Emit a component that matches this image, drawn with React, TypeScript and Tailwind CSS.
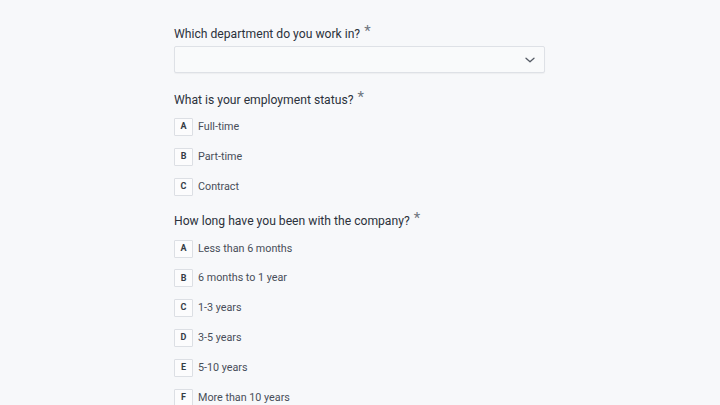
import React from "react";

const groups = [
  {
    q: "What is your employment status?",
    opts: ["Full-time", "Part-time", "Contract"],
    mt: "mt-[19px]",
    gap: "mt-[10px]",
  },
  {
    q: "How long have you been with the company?",
    opts: [
      "Less than 6 months",
      "6 months to 1 year",
      "1-3 years",
      "3-5 years",
      "5-10 years",
      "More than 10 years",
    ],
    mt: "mt-[17px]",
    gap: "mt-[11px]",
  },
];

const letters = ["A", "B", "C", "D", "E", "F"];

function Label({ text }: { text: string }) {
  return (
    <div className="flex items-start h-[16px] text-[12.15px] leading-[16px] text-[#2c323c]">
      <span>{text}</span>
      <span className="ml-[4px] -mt-[3px] text-[15px] leading-[16px] text-[#707680]">*</span>
    </div>
  );
}

export default function App() {
  return (
    <div
      className="min-h-[405px] w-[720px] bg-[#f7f8fa] overflow-hidden"
      style={{ fontFamily: "Roboto, Inter, sans-serif" }}
    >
      <div className="ml-[174px] w-[371px] pt-[26px] flex flex-col">
        <Label text="Which department do you work in?" />
        <div className="mt-[4px] h-[27px] rounded-[2px] border border-[#dee1e6] bg-[#f9fafb] shadow-[0_1px_1px_rgba(0,0,0,0.04)] flex items-center justify-end pr-[8px]">
          <svg width="12" height="12" viewBox="0 0 24 24" fill="none" stroke="#555b65" strokeWidth="2.6" strokeLinecap="round" strokeLinejoin="round">
            <path d="M4 8.5l8 7 8-7" />
          </svg>
        </div>
        {groups.map((g, gi) => (
          <div key={gi} className={`${g.mt} flex flex-col`}>
            <Label text={g.q} />
            <div className={`${g.gap} flex flex-col gap-[11.8px]`}>
              {g.opts.map((o, i) => (
                <div key={i} className="flex items-center h-[18px]">
                  <div className="w-[19px] h-[18px] border border-[#dcdfe4] bg-[#fcfcfd] rounded-[1px] flex items-center justify-center text-[9px] font-bold text-[#353b45]">
                    {letters[i]}
                  </div>
                  <span className="ml-[5px] text-[10.75px] text-[#484e59]">{o}</span>
                </div>
              ))}
            </div>
          </div>
        ))}
      </div>
    </div>
  );
}
